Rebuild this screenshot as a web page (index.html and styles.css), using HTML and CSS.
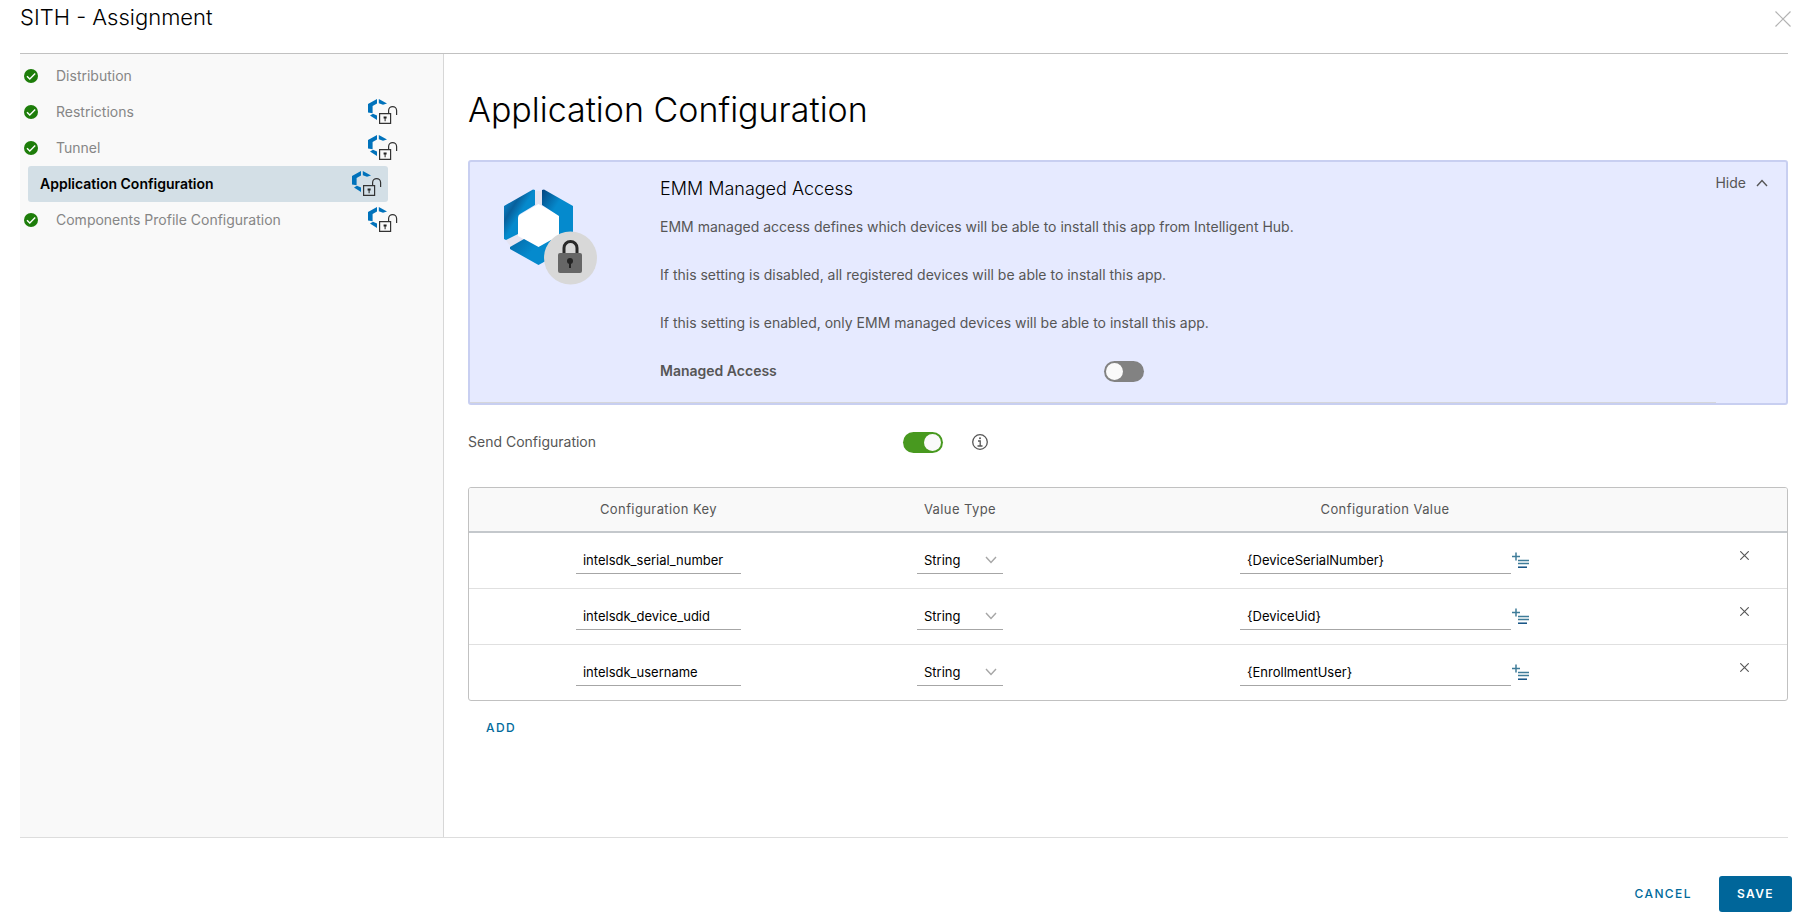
FILE: index.html
```html
<!DOCTYPE html>
<html lang="en">
<head>
<meta charset="utf-8">
<title>SITH - Assignment</title>
<link rel="stylesheet" href="styles.css">
</head>
<body>
<svg class="sprite" aria-hidden="true">
  <symbol id="check" viewBox="0 0 14 14">
    <circle cx="7" cy="7" r="7" fill="#1d7d0a"/>
    <path d="M3 7.2 5.8 10 11.2 4.6" fill="none" stroke="#fff" stroke-width="1.4"/>
  </symbol>
  <symbol id="hub-lock" viewBox="0 0 30 26">
    <g fill="#0072bb">
      <path d="M9 0v4.6L4.6 7v7.2L0 13.6V5z"/>
      <path d="M10.8 0 19 4.6l-4 1.2-4.2-1.6z"/>
      <path d="M2 16.4 5 14.8l4 1.6V21z"/>
    </g>
    <path d="M11.6 14.6h11v9.8h-11z" fill="none" stroke="#333" stroke-width="1.2"/>
    <path d="M20.6 14.4V11.6a4 4 0 0 1 8 0V16" fill="none" stroke="#333" stroke-width="1.2"/>
    <path d="M15.6 17.6h3v2h-1v2.6h-1v-2.6h-1z" fill="#222"/>
  </symbol>
  <symbol id="chevron" viewBox="0 0 12 8">
    <path d="M1 1l5 5.5 5-5.5" fill="none" stroke="currentColor" stroke-width="1.4"/>
  </symbol>
  <symbol id="cross" viewBox="0 0 16 16">
    <path d="M0.5 0.5l15 15M15.5 0.5l-15 15" fill="none" stroke="currentColor" stroke-width="var(--stroke)"/>
  </symbol>
  <symbol id="lookup" viewBox="0 0 18 17">
    <path d="M0 4.5h8M4 0.5v8" stroke="#3f7c99" stroke-width="1.5"/>
    <path d="M6 8.5h11M6 11.5h11" stroke="#3f7c99" stroke-width="1.6"/>
    <path d="M6 15.2h9" stroke="#00447a" stroke-width="1.4"/>
  </symbol>
</svg>

<div class="dialog">
  <header class="dialog-header">
    <h1 class="dialog-title">SITH - Assignment</h1>
    <button class="icon-button close" type="button" aria-label="Close"><svg><use href="#cross"/></svg></button>
  </header>

  <div class="dialog-body">
    <nav class="steps" aria-label="Steps">
      <button class="step" type="button"><svg class="check"><use href="#check"/></svg><span>Distribution</span></button>
      <button class="step" type="button"><svg class="check"><use href="#check"/></svg><span>Restrictions</span><svg class="hub-lock"><use href="#hub-lock"/></svg></button>
      <button class="step" type="button"><svg class="check"><use href="#check"/></svg><span>Tunnel</span><svg class="hub-lock"><use href="#hub-lock"/></svg></button>
      <button class="step current" type="button" aria-current="step"><span>Application Configuration</span><svg class="hub-lock"><use href="#hub-lock"/></svg></button>
      <button class="step" type="button"><svg class="check"><use href="#check"/></svg><span>Components Profile Configuration</span><svg class="hub-lock"><use href="#hub-lock"/></svg></button>
    </nav>

    <main class="content">
      <h2 class="page-title">Application Configuration</h2>

      <section class="panel">
        <svg class="panel-logo" viewBox="0 0 94 96" aria-hidden="true">
          <defs>
            <linearGradient id="g1" x1="0" y1="0" x2="1" y2="1"><stop offset="0.1" stop-color="#0b8ad0"/><stop offset="0.32" stop-color="#08609c"/><stop offset="0.5" stop-color="#058acd"/></linearGradient>
            <linearGradient id="g2" x1="0" y1="0" x2="1" y2="1"><stop offset="0" stop-color="#04447f"/><stop offset="0.4" stop-color="#058acd"/></linearGradient>
            <linearGradient id="g3" x1="0" y1="0" x2="1" y2="0.6"><stop offset="0" stop-color="#0467a5"/><stop offset="0.6" stop-color="#058acd"/></linearGradient>
          </defs>
          <path d="M31 2h7v14l-7 2zM1 50l13-7 6 7-13 8z" fill="#e4e4f2"/>
          <path d="M34.5 15 56 27v24L34.5 58 14 47V27z" fill="#fff"/>
          <path d="M29 0.5 31 1v15L16 25q-2 1-2 4v16L2 51 0 50V17z" fill="url(#g1)"/>
          <path d="M38 1l2-0.5L69 17v33L55 46V27L38 16z" fill="url(#g2)"/>
          <path d="M6 58 20 50l14.5 8L47 51v18L34.5 76 6 60z" fill="url(#g3)"/>
          <circle cx="66.5" cy="69" r="26.5" fill="#d8d8d8"/>
          <path d="M60 65v-6a6.5 6.5 0 0 1 13 0v6" fill="none" stroke="#292929" stroke-width="3"/>
          <rect x="54" y="64" width="24" height="20" rx="2" fill="#666"/>
          <circle cx="66" cy="72" r="3" fill="#242424"/>
          <path d="M66 72v7" stroke="#242424" stroke-width="2"/>
        </svg>
        <div class="panel-text">
          <h3 class="panel-title">EMM Managed Access</h3>
          <p>EMM managed access defines which devices will be able to install this app from Intelligent Hub.</p>
          <p>If this setting is disabled, all registered devices will be able to install this app.</p>
          <p>If this setting is enabled, only EMM managed devices will be able to install this app.</p>
          <div class="managed-row">
            <label for="managed">Managed Access</label>
            <input class="toggle" id="managed" type="checkbox" role="switch">
          </div>
        </div>
        <button class="hide" type="button">Hide <svg><use href="#chevron"/></svg></button>
      </section>

      <div class="send-row">
        <label for="send">Send Configuration</label>
        <input class="toggle" id="send" type="checkbox" role="switch" checked>
        <button class="icon-button info" type="button" aria-label="Information">
          <svg viewBox="0 0 16 16"><circle cx="8" cy="8" r="7.3" fill="none" stroke="#565656" stroke-width="1.3"/><circle cx="8" cy="4.3" r="1" fill="#565656"/><path d="M6 7h2.2v5M5.5 12h5" fill="none" stroke="#565656" stroke-width="1.3"/></svg>
        </button>
      </div>

      <div class="grid-frame">
        <table class="config">
          <colgroup><col class="c-key"><col class="c-type"><col class="c-value"><col class="c-remove"></colgroup>
          <thead><tr><th scope="col">Configuration Key</th><th scope="col">Value Type</th><th scope="col">Configuration Value</th><td></td></tr></thead>
          <tbody>
            <tr>
              <td><input class="field key" type="text" aria-label="Configuration key 1" value="intelsdk_serial_number"></td>
              <td><span class="select"><select aria-label="Value type 1"><option>String</option></select><svg><use href="#chevron"/></svg></span></td>
              <td><div class="value-cell"><input class="field value" type="text" aria-label="Configuration value 1" value="{DeviceSerialNumber}"><button class="icon-button lookup" type="button" aria-label="Insert lookup value"><svg><use href="#lookup"/></svg></button></div></td>
              <td class="remove-cell"><button class="icon-button remove" type="button" aria-label="Remove row"><svg><use href="#cross"/></svg></button></td>
            </tr>
            <tr>
              <td><input class="field key" type="text" aria-label="Configuration key 2" value="intelsdk_device_udid"></td>
              <td><span class="select"><select aria-label="Value type 2"><option>String</option></select><svg><use href="#chevron"/></svg></span></td>
              <td><div class="value-cell"><input class="field value" type="text" aria-label="Configuration value 2" value="{DeviceUid}"><button class="icon-button lookup" type="button" aria-label="Insert lookup value"><svg><use href="#lookup"/></svg></button></div></td>
              <td class="remove-cell"><button class="icon-button remove" type="button" aria-label="Remove row"><svg><use href="#cross"/></svg></button></td>
            </tr>
            <tr>
              <td><input class="field key" type="text" aria-label="Configuration key 3" value="intelsdk_username"></td>
              <td><span class="select"><select aria-label="Value type 3"><option>String</option></select><svg><use href="#chevron"/></svg></span></td>
              <td><div class="value-cell"><input class="field value" type="text" aria-label="Configuration value 3" value="{EnrollmentUser}"><button class="icon-button lookup" type="button" aria-label="Insert lookup value"><svg><use href="#lookup"/></svg></button></div></td>
              <td class="remove-cell"><button class="icon-button remove" type="button" aria-label="Remove row"><svg><use href="#cross"/></svg></button></td>
            </tr>
          </tbody>
        </table>
      </div>
      <button class="button" type="button">ADD</button>
    </main>
  </div>

  <footer class="dialog-footer">
    <button class="button" type="button">CANCEL</button>
    <button class="button primary" type="button">SAVE</button>
  </footer>
</div>
</body>
</html>
```
FILE: styles.css
```css
* { box-sizing: border-box; }

body {
  margin: 0;
  background: #fff;
  color: #565656;
  font: 14px/24px Inter, "Open Sans", sans-serif;
}

h1, h2, h3, p { margin: 0; }

h1, h2, h3 {
  color: #000;
  font-weight: 300;
}

button, input, select { font: inherit; }

.sprite {
  position: absolute;
  width: 0;
  height: 0;
}

.dialog {
  display: flex;
  flex-direction: column;
  min-height: 100vh;
}

.dialog-header {
  display: flex;
  justify-content: space-between;
  align-items: flex-start;
  height: 53px;
  padding: 2px 12px 0 20px;
}

.dialog-title {
  font-size: 22px;
  line-height: 30px;
}

.icon-button {
  display: block;
  padding: 0;
  border: 0;
  background: none;
  --stroke: 1;
}

.icon-button svg {
  display: block;
  width: 16px;
  height: 16px;
}

.close {
  margin-top: 9px;
  color: #b3b3b3;
  --stroke: 1.2;
}

.dialog-body {
  display: flex;
  flex: 1;
  margin: 0 15px 0 20px;
  border-top: 1px solid #c1c1c1;
  border-bottom: 1px solid #ddd;
}

.steps {
  flex: none;
  width: 424px;
  padding: 4px 0;
  border-right: 1px solid #d7d7d7;
  background: #f9f9f9;
}

.step {
  display: flex;
  align-items: center;
  width: 378px;
  height: 36px;
  padding: 0 0 0 4px;
  border: 0;
  background: none;
  color: #868686;
  text-align: left;
}

.check {
  width: 14px;
  height: 14px;
  margin-right: 18px;
}

.hub-lock {
  width: 30px;
  height: 26px;
  margin-left: auto;
}

.step.current {
  width: 360px;
  margin-left: 8px;
  padding: 0 6px 0 12px;
  border-radius: 3px;
  background: #d3dfe6;
  color: #000;
  font-weight: 600;
}

.content {
  flex: 1;
  min-width: 0;
  padding: 36px 0 0 24px;
}

.page-title {
  font-size: 34px;
  line-height: 40px;
}

.panel {
  display: flex;
  align-items: flex-start;
  margin-top: 30px;
  padding: 13px 18px 0 34px;
  border: 2px solid #c8cff1;
  border-radius: 3px;
  background:
    linear-gradient(#d5d6da, #d5d6da) 0 100% / calc(100% - 70px) 1px no-repeat,
    #e6eaff;
}

.panel-logo {
  flex: none;
  width: 94px;
  height: 96px;
  margin-top: 14px;
}

.panel-text {
  flex: 1;
  margin-left: 62px;
  padding-bottom: 20px;
}

.panel-title {
  margin-bottom: 12px;
  font-size: 18px;
  line-height: 28px;
}

.panel-text p { margin-bottom: 24px; }

.managed-row {
  display: grid;
  grid-template-columns: 444px auto;
  justify-content: start;
  align-items: center;
  font-weight: 600;
}

.hide {
  display: flex;
  align-items: center;
  gap: 10px;
  margin-top: -4px;
  padding: 0;
  border: 0;
  background: none;
  color: #565656;
}

.hide svg {
  width: 12px;
  height: 8px;
  rotate: 180deg;
}

.toggle {
  appearance: none;
  display: block;
  width: 40px;
  height: 21px;
  margin: 0;
  padding: 2px;
  border-radius: 11px;
  background: #828282;
}

.toggle::before {
  content: "";
  display: block;
  width: 17px;
  height: 17px;
  border-radius: 50%;
  background: #fafafa;
}

.toggle:checked { background: #48991f; }

.toggle:checked::before { margin-left: auto; }

.send-row {
  display: grid;
  grid-template-columns: 435px 69px auto;
  justify-content: start;
  align-items: center;
  margin: 25px 0 33px;
}

.grid-frame {
  overflow: hidden;
  border: 1px solid #c1c1c1;
  border-radius: 3px;
}

.config {
  width: 100%;
  border-collapse: collapse;
  table-layout: fixed;
  font-size: 13px;
}

.c-key { width: 28.75%; }
.c-type { width: 17%; }
.c-value { width: 47.5%; }
.c-remove { width: 6.75%; }

.config th,
.config td {
  padding: 0;
  text-align: center;
}

.config thead tr {
  height: 44px;
  border-bottom: 2px solid #c4c8cc;
  background: #f9f9f9;
}

.config th {
  padding-bottom: 2px;
  color: #565656;
  font-weight: 400;
  letter-spacing: 0.4px;
}

.config tbody tr { height: 56px; }

.config tbody tr + tr { border-top: 1px solid #e0e0e0; }

.field,
.select select {
  height: 28px;
  padding: 0 7px;
  border: 0;
  border-bottom: 1px solid #a6a6a6;
  border-radius: 0;
  background: none;
  color: #000;
}

.key { width: 165px; }

.value { width: 271px; }

.select {
  display: inline-grid;
  align-items: center;
  width: 86px;
}

.select select {
  appearance: none;
  grid-area: 1 / 1;
  width: 100%;
}

.select svg {
  grid-area: 1 / 1;
  justify-self: end;
  width: 12px;
  height: 8px;
  margin-right: 6px;
  color: #a6a6a6;
  pointer-events: none;
}

.value-cell {
  display: flex;
  justify-content: center;
  align-items: center;
  gap: 1px;
}

.lookup svg {
  width: 18px;
  height: 17px;
}

.config .remove-cell {
  padding-left: 3px;
  vertical-align: top;
}

.config .remove {
  margin: 18px auto 0;
  color: #565656;
  --stroke: 2;
}

.remove svg {
  width: 9px;
  height: 9px;
}

.button {
  height: 36px;
  padding: 0 18px;
  border: 0;
  border-radius: 3px;
  background: none;
  color: #006a9b;
  font-size: 12px;
  font-weight: 500;
  letter-spacing: 1.4px;
}

.content > .button { margin-top: 9px; }

.primary {
  background: #00669a;
  color: #fff;
  font-weight: 600;
}

.dialog-footer {
  display: flex;
  justify-content: flex-end;
  gap: 9px;
  padding: 38px 11px 11px;
}
```
